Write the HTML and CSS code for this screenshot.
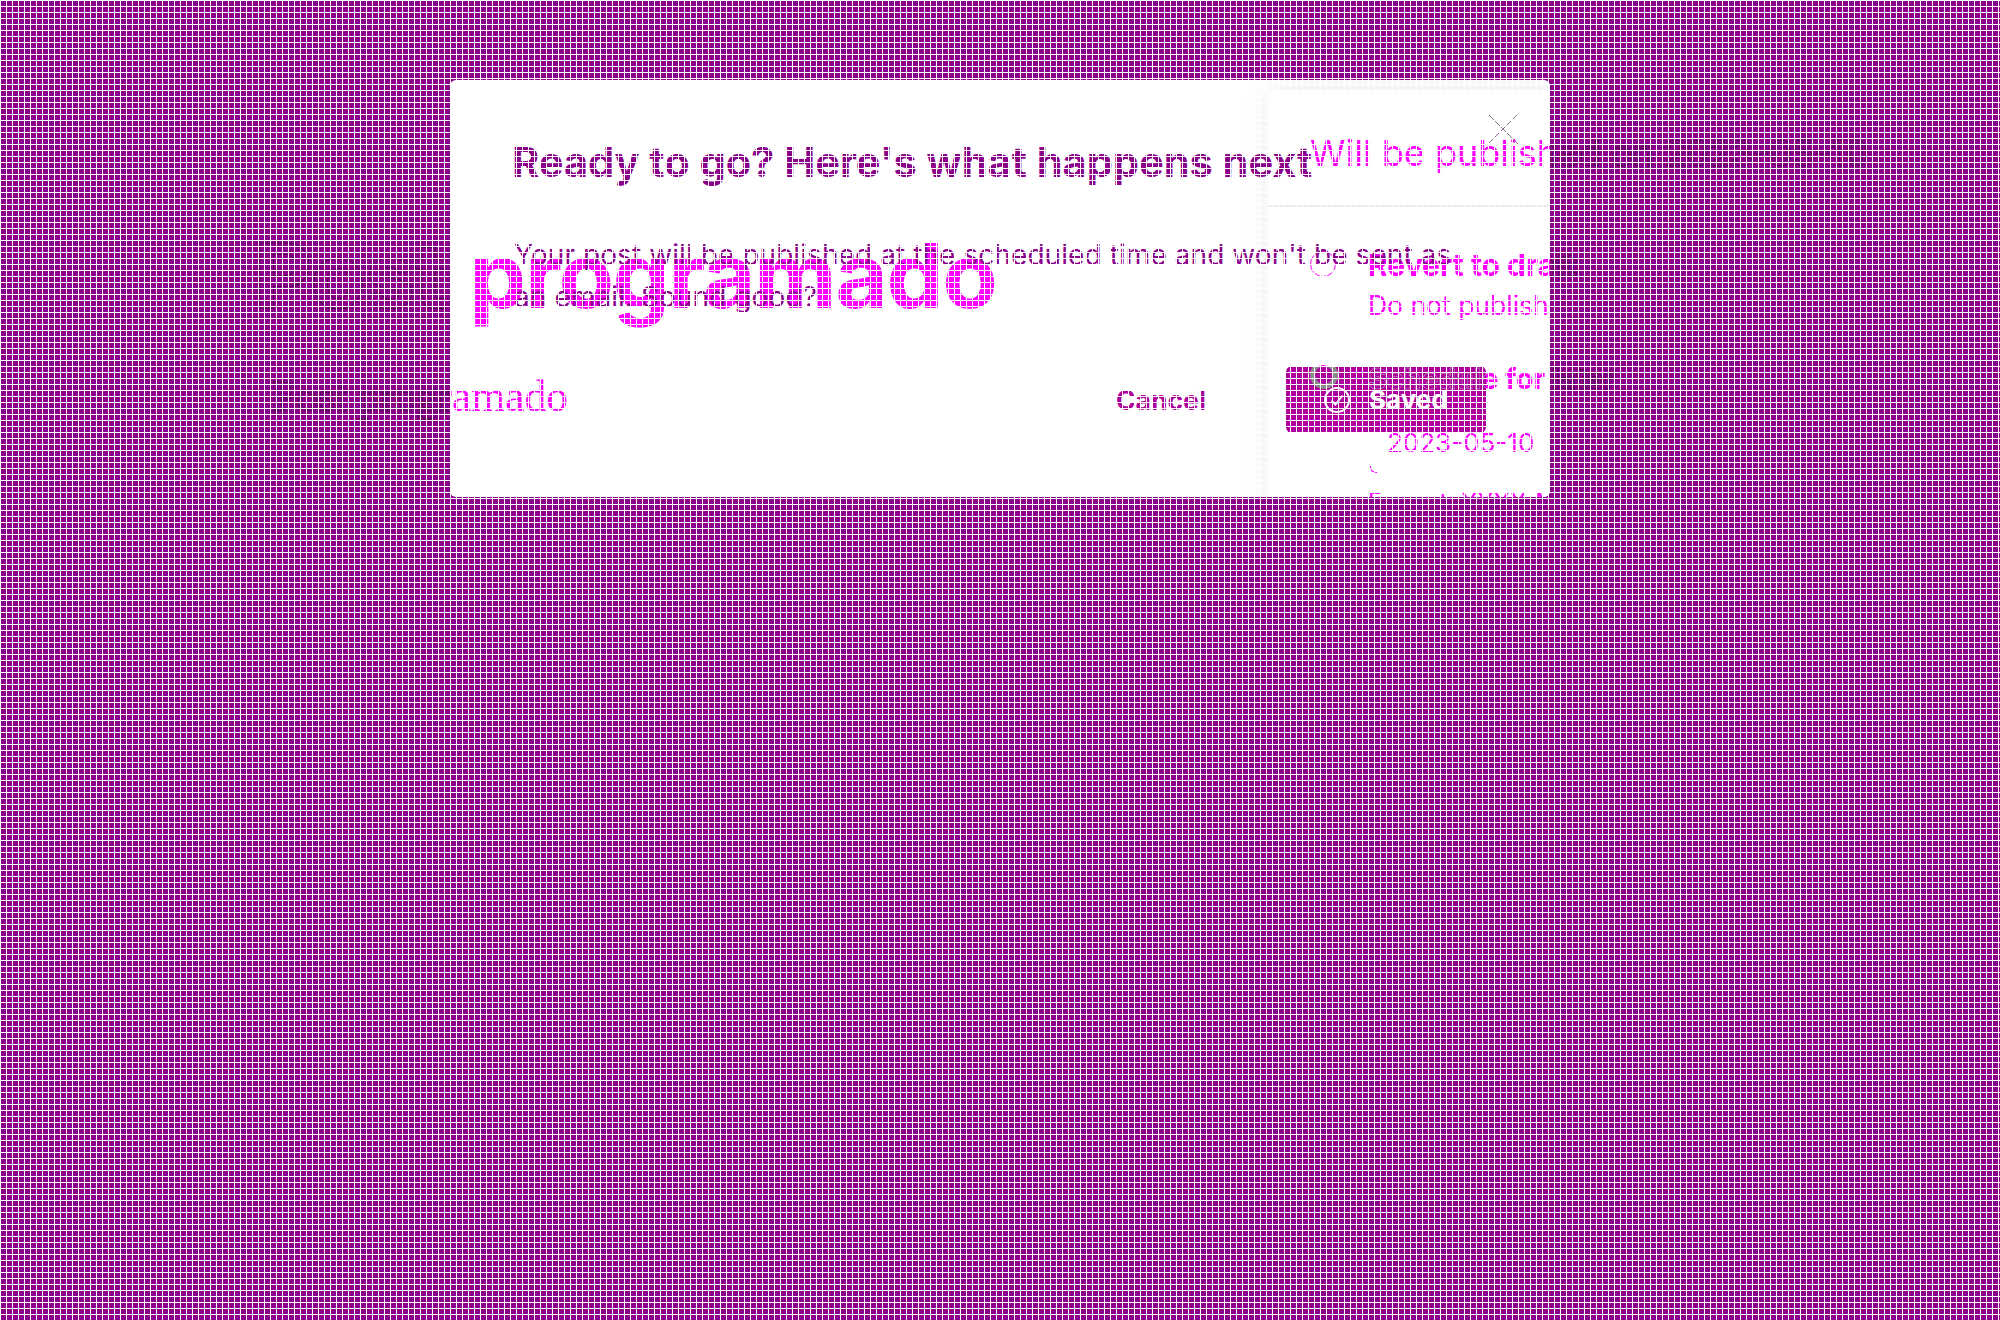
FILE: index.html
```html
<!DOCTYPE html>
<html lang="en">
<head>
  <meta charset="UTF-8" />
  <title>Post programado</title>
  <link rel="stylesheet" href="styles.css">
</head>
<body>
  <!-- Page behind the modal: only the glyph edges show on the purple -->
  <div class="hero hero-back" aria-hidden="true">
    <h1>Post programado</h1>
    <p>Post programado</p>
  </div>
  <div class="panel panel-back" aria-hidden="true">
    <div class="panel-head">Will be published on 2023-05-10</div>
    <div class="panel-body">
      <div class="option">
        <span class="radio"></span>
        <div>
          <div class="option-title">Revert to draft</div>
          <div class="option-sub">Do not publish</div>
        </div>
      </div>
      <div class="option option-later">
        <span class="radio"></span>
        <div>
          <div class="option-title">Schedule for later</div>
          <div class="option-date">2023-05-10</div>
        </div>
      </div>
    </div>
  </div>

  <div class="modal">
    <div class="hero hero-front">
      <h1>Post programado</h1>
      <p>Post programado</p>
    </div>

    <div class="panel panel-front">
      <div class="panel-head">Will be published on 2023-05-10</div>
      <div class="panel-body">
        <div class="option">
          <span class="radio"></span>
          <div>
            <div class="option-title">Revert to draft</div>
            <div class="option-sub">Do not publish</div>
          </div>
        </div>
        <div class="option option-later">
          <span class="radio"></span>
          <div>
            <div class="option-title">Schedule for later</div>
            <div class="option-date">2023-05-10</div>
            <span class="field-corner"></span>
            <div class="option-hint">Format: YYYY-MM-DD</div>
          </div>
        </div>
      </div>
    </div>

    <div class="modal-content">
      <h2>Ready to go? Here's what happens next</h2>
      <p class="modal-text">Your post will be published at the scheduled time and won't be sent as an email. Sound good?</p>
      <div class="modal-actions">
        <button type="button" class="btn-cancel">Cancel</button>
        <button type="button" class="btn-saved">
          <span class="ghost-ring"></span>
          <span class="ghost-label">Schedule for later</span>
          <svg class="check" width="28" height="28" viewBox="0 0 28 28" fill="none" stroke="#fff" stroke-width="2">
            <circle cx="14" cy="14" r="12"/>
            <path d="M8.5 14.5l4 4 7-9"/>
          </svg>
          Saved
        </button>
      </div>
    </div>

    <svg class="close" width="32" height="32" viewBox="0 0 32 32" fill="none" stroke="#8b6f8b" stroke-width="1">
      <path d="M1 1l30 30M31 1L1 31"/>
    </svg>
  </div>

  <div class="grid-overlay"></div>
</body>
</html>
```
FILE: styles.css
```css
html, body {
  margin: 0;
  padding: 0;
  height: 100%;
}

body {
  position: relative;
  background-color: #8b008b;
  font-family: "Inter", "Liberation Sans", sans-serif;
  overflow: hidden;
}

/* white 1px lines every 6px, on top of everything */
.grid-overlay {
  position: absolute;
  inset: 0;
  pointer-events: none;
  background-image:
    linear-gradient(to right, #fff 1px, transparent 1px),
    linear-gradient(to bottom, #fff 1px, transparent 1px);
  background-size: 6px 6px;
}

/* Hero */
.hero {
  position: absolute;
  white-space: nowrap;
}

.hero h1 {
  margin: 0;
  font-size: 90px;
  line-height: 100px;
  font-weight: 700;
  letter-spacing: -1px;
  word-spacing: 3px;
}

.hero p {
  margin: 45px 0 0 18px;
  font-family: "Liberation Serif", serif;
  font-size: 43.5px;
  line-height: 50px;
}

.hero-back {
  left: 254px;
  top: 226px;
  color: transparent;
  -webkit-text-stroke: 0.5px rgba(0, 0, 0, 0.75);
}

.hero-front {
  left: -196px;
  top: 146px;
  color: #ff00ff;
}

/* Modal */
.modal {
  position: absolute;
  left: 450px;
  top: 80px;
  width: 1100px;
  height: 417px;
  background-color: #fff;
  border-radius: 6px;
  overflow: hidden;
}

.modal-content {
  position: relative;
  padding: 58px 64px 0 62px;
  width: 974px;
}

.modal-content h2 {
  margin: 0;
  font-size: 41.5px;
  line-height: 48px;
  font-weight: 700;
  color: #8b008b;
  white-space: nowrap;
}

.modal-text {
  margin: 48px 0 0 2px;
  width: 960px;
  font-size: 28px;
  line-height: 42px;
  letter-spacing: 0.08px;
  color: #8b008b;
}

.modal-actions {
  display: flex;
  justify-content: flex-end;
  align-items: center;
  gap: 80px;
  margin-top: 48px;
}

.btn-cancel {
  border: none;
  background: none;
  padding: 0;
  font: 700 26.5px "Inter", "Liberation Sans", sans-serif;
  color: #ae009e;
}

.btn-saved {
  position: relative;
  display: flex;
  align-items: center;
  gap: 18px;
  box-sizing: border-box;
  width: 200px;
  height: 67px;
  padding: 0 0 0 37px;
  border: none;
  border-radius: 6px;
  background-color: #ae009e;
  font: 700 26px "Inter", "Liberation Sans", sans-serif;
  color: #fff;
  overflow: hidden;
}

.check {
  position: relative;
  flex: none;
}

.ghost-ring {
  position: absolute;
  left: 24px;
  top: -5px;
  width: 18px;
  height: 18px;
  border: 5px solid #8a8a8a;
  border-radius: 50%;
}

.ghost-label {
  position: absolute;
  left: 82px;
  top: -5px;
  font-size: 28.5px;
  white-space: nowrap;
  color: transparent;
  -webkit-text-stroke: 0.5px #b9b0b9;
}

.close {
  position: absolute;
  left: 1037px;
  top: 33px;
}

/* Slide-out schedule panel */
.panel {
  position: absolute;
  width: 560px;
  white-space: nowrap;
}

.panel-head {
  box-sizing: border-box;
  height: 117px;
  padding: 41px 0 0 42px;
  font-size: 36px;
  line-height: 44px;
  border-bottom: 2px solid #e8edf2;
}

.panel-body {
  padding: 40px 0 0 42px;
}

.option {
  display: flex;
  gap: 32px;
  margin-bottom: 40px;
}

.radio {
  flex: none;
  box-sizing: border-box;
  width: 26px;
  height: 26px;
  margin-top: 4px;
  border: 1px solid currentColor;
  border-radius: 50%;
}

.option-title {
  font-size: 30px;
  line-height: 36px;
  font-weight: 700;
}

.option-later .option-title {
  font-size: 28.5px;
}

.option-sub {
  margin-top: 6px;
  font-size: 26.5px;
  line-height: 32px;
}

.option-date {
  margin: 29px 0 0 19px;
  font-size: 26px;
  line-height: 34px;
}

.field-corner {
  display: block;
  width: 6px;
  height: 6px;
  margin: 6px 0 0 2px;
  border-left: 1px solid currentColor;
  border-bottom: 1px solid currentColor;
  border-radius: 0 0 0 6px;
}

.option-hint {
  margin-top: 14px;
  font-size: 24px;
  line-height: 30px;
}

.panel-back {
  left: 1268px;
  top: 90px;
  color: transparent;
  -webkit-text-stroke: 0.5px rgba(0, 0, 0, 0.75);
}

.panel-back .panel-head {
  border-bottom-color: transparent;
}

.panel-back .radio {
  border-color: transparent;
}

.panel-front {
  left: 818px;
  top: 10px;
  height: 420px;
  color: #ff00ff;
  background-color: #fff;
  border-radius: 8px 0 0 0;
  box-shadow: 0 0 24px rgba(40, 60, 80, 0.12);
}
```
